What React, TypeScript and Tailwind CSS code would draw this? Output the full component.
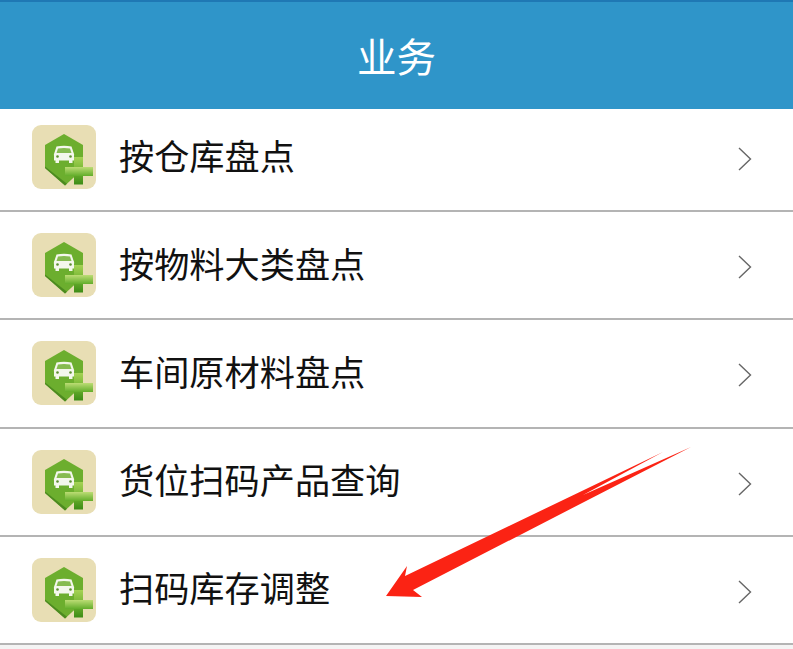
const items = [
  { label: "按仓库盘点", first: true },
  { label: "按物料大类盘点" },
  { label: "车间原材料盘点" },
  { label: "货位扫码产品查询" },
  { label: "扫码库存调整" },
];

const CarIcon = ({ id }: { id: number }) => (
  <div className="w-[64px] h-[64px] shrink-0 rounded-[9px] bg-[#e8deb4]">
    <svg width="64" height="64" viewBox="0 0 64 64">
      <defs>
        <linearGradient id={`plusV${id}`} x1="0" y1="0" x2="0" y2="1">
          <stop offset="0" stopColor="#a5d255" />
          <stop offset="0.5" stopColor="#74b532" />
          <stop offset="1" stopColor="#3c8c16" />
        </linearGradient>
        <linearGradient id={`plusH${id}`} x1="0" y1="0" x2="0" y2="1">
          <stop offset="0" stopColor="#bcdc74" />
          <stop offset="1" stopColor="#62ad2a" />
        </linearGradient>
      </defs>
      <path d="M32 9 L51 20 L51 44 L33 60.500 L13 43 L13 20 Z" fill="#6cae2e" />
      <path d="M13 41.500 L13 43 L33 60.500 L35 58.700 Z" fill="#4c8a20" />
      <path
        d="M24.500 21.500 Q32 20 39.500 21.500 L41.500 27.500 Q42.500 29 42 31 L42 35.500 L40.500 35.500 L40.500 38 L37 38 L37 35.500 L27 35.500 L27 38 L23.500 38 L23.500 35.500 L22 35.500 L22 31 Q21.500 29 22.500 27.500 Z"
        fill="#f4f7ec"
      />
      <path d="M26 23.500 Q32 22.500 38 23.500 L39.500 28 L24.500 28 Z" fill="#86bb50" />
      <circle cx="25.500" cy="31.500" r="1.300" fill="#5c8f30" />
      <circle cx="38.500" cy="31.500" r="1.300" fill="#5c8f30" />
      <path d="M42 32 L51 32 L51 59.500 L42 59.500 Z" fill={`url(#plusV${id})`} />
      <path d="M33 42 L61 42 L61 51 L33 51 Z" fill={`url(#plusH${id})`} />
    </svg>
  </div>
);

const Chevron = () => (
  <svg width="14" height="24" viewBox="0 0 14 24" className="shrink-0 mt-[4px]">
    <path d="M1 1 L12.500 12 L1 23" fill="none" stroke="#666666" strokeWidth="1.400" />
  </svg>
);

const App = () => {
  return (
    <div className="relative w-[793px] h-[649px] overflow-hidden bg-white font-['Noto_Sans_CJK_SC',sans-serif]">
      <div className="h-[109px] flex items-center justify-center bg-[#2f95c9] border-t-2 border-[#1f78b4]">
        <span className="text-[39.500px] leading-none text-white -mt-[1px]">业务</span>
      </div>
      {items.map((item, i) => (
        <div
          key={item.label}
          className={`flex items-center pl-[32px] pr-[41px] border-b-2 border-[#b4b4b4] ${
            item.first ? "h-[103px] pb-[6px]" : "h-[108.250px]"
          }`}
        >
          <CarIcon id={i} />
          <span
            className={`ml-[23px] flex-1 text-[35.200px] leading-none text-[#111111] ${
              item.first ? "-mt-[4px]" : "-mt-[6px]"
            }`}
          >
            {item.label}
          </span>
          <Chevron />
        </div>
      ))}
      <div className="h-[5px] bg-[#f4f4f4]" />
      <svg
        className="absolute left-0 top-0 pointer-events-none"
        width="793"
        height="649"
        viewBox="0 0 793 649"
      >
        <path
          d="M386 596 L407 566 L405 576 L663 452 L583 495 L691 447 L413 590 L422 597 Z"
          fill="#fb2314"
        />
      </svg>
    </div>
  );
};

export default App;
